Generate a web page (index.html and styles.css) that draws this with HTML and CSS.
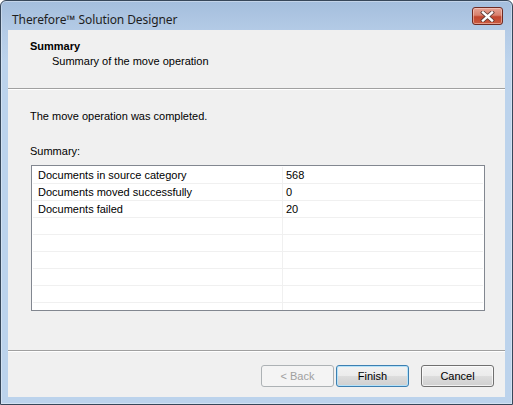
FILE: index.html
```html
<!DOCTYPE html>
<html>
<head>
<meta charset="utf-8">
<link rel="stylesheet" href="styles.css">
</head>
<body>
<div class="window">
  <div class="titlebar">
    <span class="title">Therefore™ Solution Designer</span>
    <div class="close">
      <svg width="15" height="11" viewBox="0 0 15 11">
        <path d="M3 1.5 L12 9.5 M12 1.5 L3 9.5" stroke="#5a3a36" stroke-width="4" stroke-linecap="square"/>
        <path d="M3 1.5 L12 9.5 M12 1.5 L3 9.5" stroke="#ffffff" stroke-width="2.4" stroke-linecap="square"/>
      </svg>
    </div>
  </div>
  <div class="client">
    <div class="header">
      <div class="h-title">Summary</div>
      <div class="h-sub">Summary of the move operation</div>
    </div>
    <div class="sep"></div>
    <div class="content">
      <p class="msg">The move operation was completed.</p>
      <p class="label">Summary:</p>
      <div class="grid">
        <div class="row"><div class="c1">Documents in source category</div><div class="c2">568</div></div>
        <div class="row"><div class="c1">Documents moved successfully</div><div class="c2">0</div></div>
        <div class="row"><div class="c1">Documents failed</div><div class="c2">20</div></div>
        <div class="row"><div class="c1"></div><div class="c2"></div></div>
        <div class="row"><div class="c1"></div><div class="c2"></div></div>
        <div class="row"><div class="c1"></div><div class="c2"></div></div>
        <div class="row"><div class="c1"></div><div class="c2"></div></div>
        <div class="row"><div class="c1"></div><div class="c2"></div></div>
        <div class="row"><div class="c1"></div><div class="c2"></div></div>
      </div>
    </div>
    <div class="sep bottom"></div>
    <div class="footer">
      <button class="btn disabled">&lt; Back</button>
      <button class="btn default">Finish</button>
      <button class="btn cancel">Cancel</button>
    </div>
  </div>
</div>
</body>
</html>
```
FILE: styles.css
```css
html, body {
  margin: 0;
  padding: 0;
  background: #ffffff;
}
.window {
  width: 513px;
  height: 405px;
  box-sizing: border-box;
  border: 1px solid #37475a;
  border-radius: 6px 6px 0 0;
  background: linear-gradient(to bottom, #a4bedd 0px, #b4cbe6 30px, #bcd3ec 60px, #bcd3ec 100%);
  padding: 0 7px 7px 7px;
  display: flex;
  flex-direction: column;
  box-shadow: inset 0 0 0 1px rgba(255,255,255,0.35);
}
.titlebar {
  height: 29px;
  display: flex;
  align-items: center;
  justify-content: space-between;
  font-family: "Noto Sans", "Open Sans", sans-serif;
  font-size: 12px;
  color: #1e1e1e;
}
.title {
  padding-left: 4px;
  margin-top: 8px;
  letter-spacing: -0.1px;
}
.close {
  width: 29px;
  height: 16px;
  margin-top: 1px;
  margin-right: 2px;
  border: 1px solid #6e2a22;
  border-radius: 3px;
  background: linear-gradient(to bottom, #e6a294 0%, #d8806d 45%, #c2452e 55%, #c95a3f 100%);
  display: flex;
  align-items: center;
  justify-content: center;
  box-shadow: inset 0 0 0 1px rgba(255,220,210,0.5);
}
.close svg { display: block; }
.client {
  flex: 1;
  background: #f0f0f0;
  display: flex;
  flex-direction: column;
  font-family: "Liberation Sans", Arial, sans-serif;
  font-size: 11px;
  color: #000;
}
.header {
  height: 58px;
  box-sizing: border-box;
  padding: 10px 0 0 22px;
}
.h-title {
  font-weight: bold;
  line-height: 13px;
}
.h-sub {
  line-height: 13px;
  margin-top: 2px;
  padding-left: 22px;
}
.sep {
  height: 1px;
  background: #a0a0a0;
  border-bottom: 1px solid #ffffff;
}
.content {
  flex: 1;
  padding: 20px 20px 0 22px;
}
.msg, .label {
  margin: 0;
  line-height: 13px;
}
.label {
  margin-top: 22px;
}
.grid {
  margin: 7px 0 0 1px;
  width: 454px;
  height: 146px;
  box-sizing: border-box;
  border: 1px solid #828790;
  background: #ffffff;
  padding: 1px 1px 0 1px;
  overflow: hidden;
}
.row {
  display: flex;
  height: 16px;
  border-bottom: 1px solid #f0f0f0;
}
.c1 {
  width: 250px;
  padding-left: 5px;
  box-sizing: border-box;
  border-right: 1px solid #f0f0f0;
  line-height: 16px;
  white-space: nowrap;
}
.c2 {
  flex: 1;
  padding-left: 3px;
  line-height: 16px;
}
.footer {
  height: 45px;
  box-sizing: border-box;
  padding: 13px 11px 0 0;
  display: flex;
  justify-content: flex-end;
  align-items: flex-start;
}
.btn {
  width: 73px;
  height: 22px;
  box-sizing: border-box;
  font-family: "Liberation Sans", Arial, sans-serif;
  font-size: 11px;
  color: #000;
  border: 1px solid #707070;
  border-radius: 3px;
  background: linear-gradient(to bottom, #f2f2f2 0%, #ebebeb 50%, #dddddd 51%, #cfcfcf 100%);
  box-shadow: inset 0 0 0 1px rgba(255,255,255,0.7);
  padding: 0;
  margin: 0;
}
.btn.disabled {
  color: #a0a0a0;
  border-color: #adb2b5;
  background: #f4f4f4;
  box-shadow: none;
}
.btn.default {
  margin-left: 2px;
  border-color: #3c7fb1;
  box-shadow: inset 0 0 0 1px #b5e2f9;
}
.btn.cancel {
  margin-left: 12px;
}
```
